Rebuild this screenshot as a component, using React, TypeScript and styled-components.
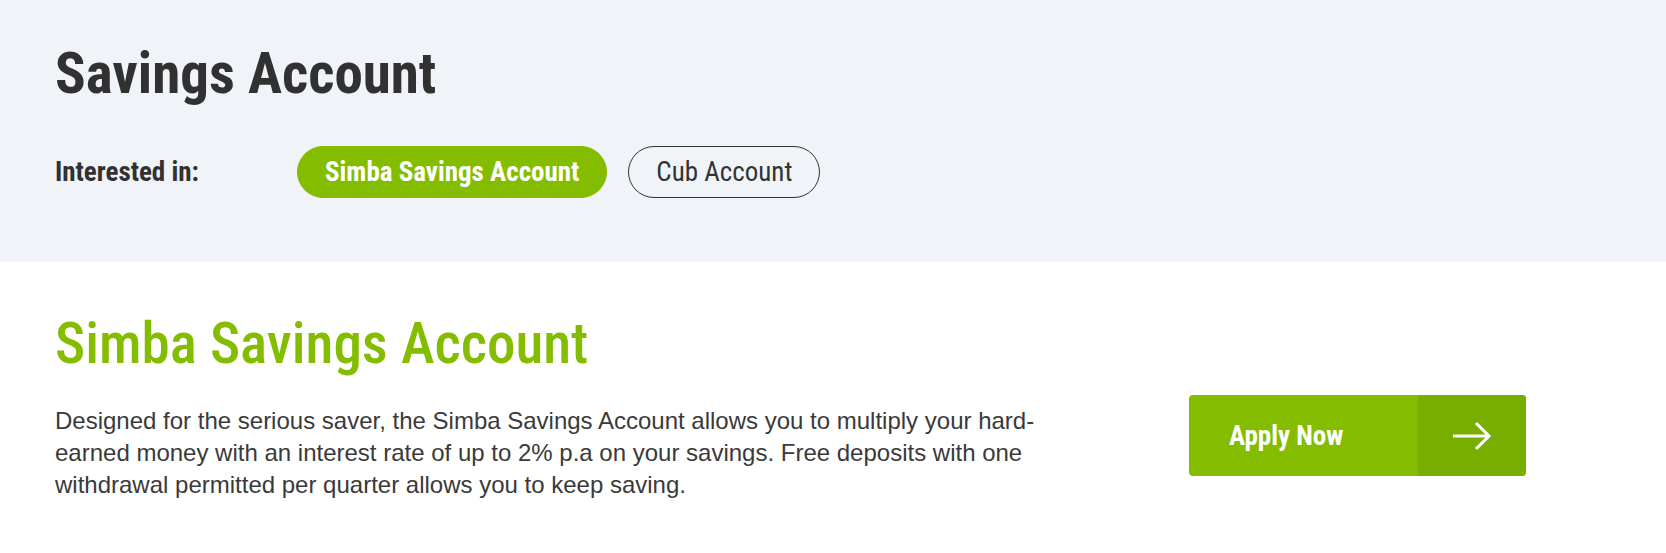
import React from 'react';
import styled, { createGlobalStyle } from 'styled-components';

const GlobalStyle = createGlobalStyle`
  html, body {
    margin: 0;
    padding: 0;
    background: #ffffff;
  }
  body {
    font-family: "Liberation Sans", Arial, sans-serif;
    color: #333333;
  }
`;

const din = `Roboto, "Liberation Sans", sans-serif`;

const Hero = styled.section`
  background: #f0f3f7;
  padding: 42px 55px 64px;
`;

const PageTitle = styled.h1`
  margin: 0;
  font-family: ${din};
  font-stretch: condensed;
  font-weight: 700;
  font-size: 57px;
  line-height: 64px;
  color: #313131;
`;

const FilterRow = styled.div`
  display: flex;
  align-items: center;
  margin-top: 40px;
`;

const FilterLabel = styled.span`
  width: 242px;
  font-family: ${din};
  font-stretch: condensed;
  font-weight: 700;
  font-size: 27px;
  color: #313131;
`;

const Pills = styled.div`
  display: flex;
  gap: 21px;
`;

const Pill = styled.button<{ $active?: boolean }>`
  display: inline-flex;
  align-items: center;
  justify-content: center;
  box-sizing: border-box;
  height: 52px;
  padding: 0 27px;
  border-radius: 26px;
  border: 1px solid ${(p) => (p.$active ? '#84bd00' : '#333333')};
  background: ${(p) => (p.$active ? '#84bd00' : 'transparent')};
  color: ${(p) => (p.$active ? '#ffffff' : '#333333')};
  font-family: ${din};
  font-stretch: condensed;
  font-weight: ${(p) => (p.$active ? 700 : 400)};
  font-size: 27px;
  cursor: pointer;
`;

const Content = styled.section`
  display: grid;
  grid-template-columns: 1134px 337px;
  padding: 46px 55px 0;
`;

const ProductInfo = styled.div`
  display: flex;
  flex-direction: column;
`;

const ProductTitle = styled.h2`
  margin: 0;
  font-family: ${din};
  font-stretch: condensed;
  font-weight: 500;
  font-size: 57px;
  line-height: 72px;
  color: #84bd00;
`;

const Description = styled.p`
  margin: 25px 0 0;
  width: 1000px;
  font-family: "Liberation Sans", Arial, sans-serif;
  font-size: 24px;
  line-height: 32px;
  color: #3a3a3a;
`;

const Actions = styled.div`
  padding-top: 87px;
`;

const ApplyButton = styled.a`
  display: flex;
  height: 81px;
  border-radius: 4px;
  overflow: hidden;
  background: #84bd00;
  text-decoration: none;
  cursor: pointer;
`;

const ApplyLabel = styled.span`
  flex: 1;
  display: flex;
  align-items: center;
  padding-left: 40px;
  font-family: ${din};
  font-stretch: condensed;
  font-weight: 700;
  font-size: 27px;
  color: #ffffff;
`;

const ApplyArrow = styled.span`
  width: 108px;
  display: flex;
  align-items: center;
  justify-content: center;
  background: #77ae00;
`;

const Arrow = () => (
  <svg width="40" height="30" viewBox="0 0 40 30" fill="none">
    <path d="M1 15H37M24 2L37 15L24 28" stroke="#ffffff" strokeWidth="3" />
  </svg>
);

const App = () => {
  return (
    <>
      <GlobalStyle />
      <Hero>
        <PageTitle>Savings Account</PageTitle>
        <FilterRow>
          <FilterLabel>Interested in:</FilterLabel>
          <Pills>
            <Pill $active>Simba Savings Account</Pill>
            <Pill>Cub Account</Pill>
          </Pills>
        </FilterRow>
      </Hero>
      <Content>
        <ProductInfo>
          <ProductTitle>Simba Savings Account</ProductTitle>
          <Description>
            Designed for the serious saver, the Simba Savings Account allows you to multiply your hard-earned money
            with an interest rate of up to 2% p.a on your savings. Free deposits with one withdrawal permitted per
            quarter allows you to keep saving.
          </Description>
        </ProductInfo>
        <Actions>
          <ApplyButton>
            <ApplyLabel>Apply Now</ApplyLabel>
            <ApplyArrow>
              <Arrow />
            </ApplyArrow>
          </ApplyButton>
        </Actions>
      </Content>
    </>
  );
};

export default App;
